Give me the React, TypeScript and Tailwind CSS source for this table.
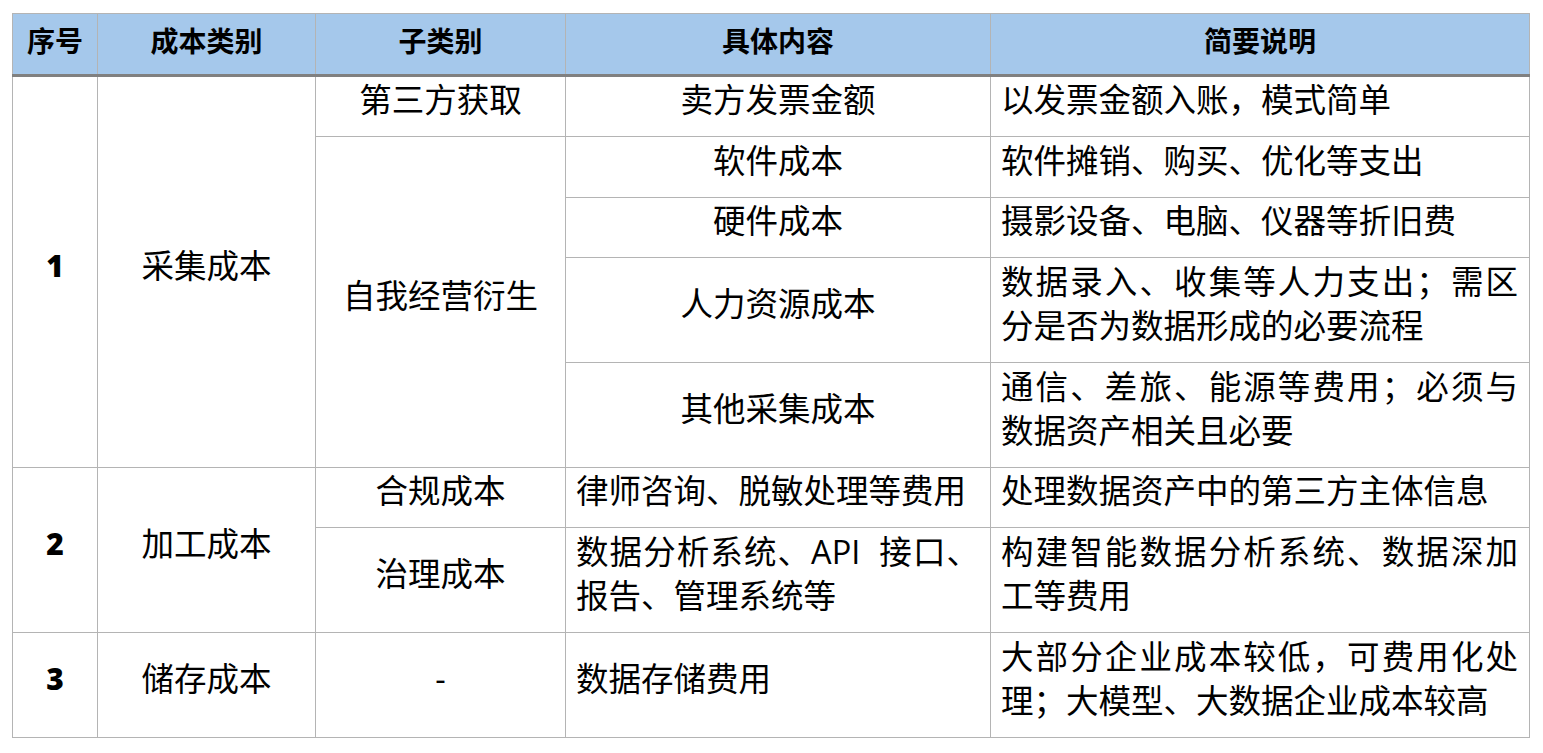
const font = "font-['Open_Sans','Noto_Sans_CJK_SC',sans-serif]";

const th = "border border-[#b4b4b4] border-b-[3px] border-b-[#808080] bg-[#a5c8eb] text-center align-middle text-[28px] font-bold leading-[40px] pb-[6px]";
const td = "border border-[#b4b4b4] align-middle text-[32.5px] leading-[44px] pb-[13px] text-black";
const center = `${td} text-center`;
const left = `${td} pl-[10px] pr-[11px] text-justify`;
const num = "border border-[#b4b4b4] align-middle text-center text-[30px] font-extrabold leading-[44px] pb-[13px]";

export default function App() {
  return (
    <div className={`min-h-screen bg-white pl-[12px] pt-[13px] ${font}`}>
      <table className="table-fixed border-collapse w-[1517px]">
        <colgroup>
          <col className="w-[85px]" />
          <col className="w-[218px]" />
          <col className="w-[250px]" />
          <col className="w-[425px]" />
          <col className="w-[539px]" />
        </colgroup>
        <thead>
          <tr className="h-[62px]">
            <th className={th}>序号</th>
            <th className={th}>成本类别</th>
            <th className={th}>子类别</th>
            <th className={th}>具体内容</th>
            <th className={th}>简要说明</th>
          </tr>
        </thead>
        <tbody>
          <tr className="h-[61px]">
            <td rowSpan={5} className={num}>1</td>
            <td rowSpan={5} className={center}>采集成本</td>
            <td className={center}>第三方获取</td>
            <td className={center}>卖方发票金额</td>
            <td className={left}>以发票金额入账，模式简单</td>
          </tr>
          <tr className="h-[61px]">
            <td rowSpan={4} className={center}>自我经营衍生</td>
            <td className={center}>软件成本</td>
            <td className={left}>软件摊销、购买、优化等支出</td>
          </tr>
          <tr className="h-[60px]">
            <td className={center}>硬件成本</td>
            <td className={left}>摄影设备、电脑、仪器等折旧费</td>
          </tr>
          <tr className="h-[105px]">
            <td className={center}>人力资源成本</td>
            <td className={left}>数据录入、收集等人力支出；需区分是否为数据形成的必要流程</td>
          </tr>
          <tr className="h-[105px]">
            <td className={center}>其他采集成本</td>
            <td className={left}>通信、差旅、能源等费用；必须与数据资产相关且必要</td>
          </tr>
          <tr className="h-[60px]">
            <td rowSpan={2} className={num}>2</td>
            <td rowSpan={2} className={center}>加工成本</td>
            <td className={center}>合规成本</td>
            <td className={left}>律师咨询、脱敏处理等费用</td>
            <td className={left}>处理数据资产中的第三方主体信息</td>
          </tr>
          <tr className="h-[105px]">
            <td className={center}>治理成本</td>
            <td className={left}>数据分析系统、API&nbsp; 接口、报告、管理系统等</td>
            <td className={left}>构建智能数据分析系统、数据深加工等费用</td>
          </tr>
          <tr className="h-[105px]">
            <td className={num}>3</td>
            <td className={center}>储存成本</td>
            <td className={center}>-</td>
            <td className={left}>数据存储费用</td>
            <td className={left}>大部分企业成本较低，可费用化处理；大模型、大数据企业成本较高</td>
          </tr>
        </tbody>
      </table>
    </div>
  );
}
